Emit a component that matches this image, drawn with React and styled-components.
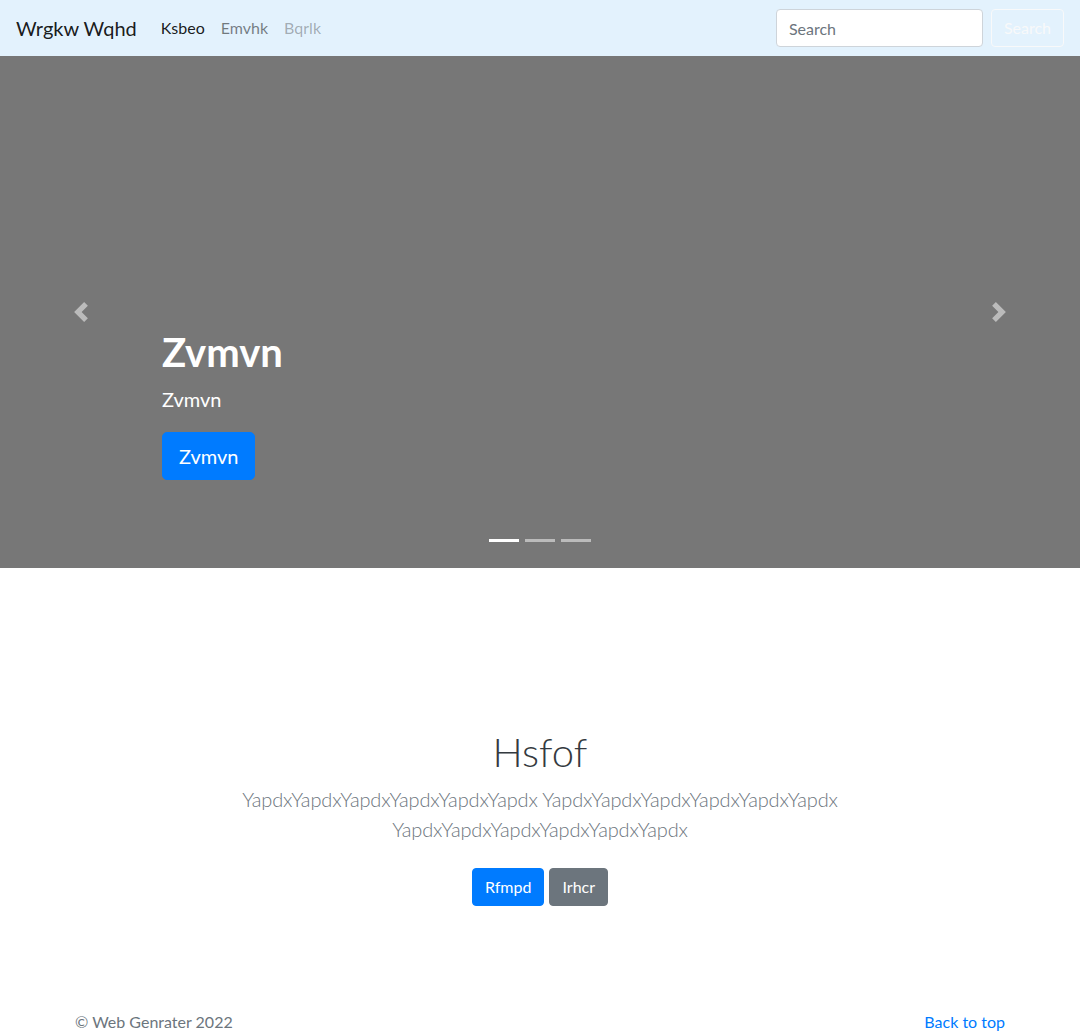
import React from 'react';
import styled, { createGlobalStyle } from 'styled-components';

const GlobalStyle = createGlobalStyle`
  * { box-sizing: border-box; }
  body {
    margin: 0;
    font-family: Lato, "Open Sans", sans-serif;
    font-size: 16px;
    line-height: 1.5;
    color: #212529;
    background: #fff;
  }
`;

const Navbar = styled.nav`
  height: 56px;
  padding: 8px 16px;
  background: #e3f2fd;
  display: flex;
  align-items: center;
`;

const Brand = styled.a`
  font-size: 20px;
  line-height: 30px;
  color: rgba(0, 0, 0, 0.9);
  margin-right: 16px;
  text-decoration: none;
`;

const NavList = styled.div`
  display: flex;
  flex: 1;
`;

const NavLink = styled.a`
  padding: 8px;
  text-decoration: none;
  color: ${p => (p.$active ? 'rgba(0,0,0,0.9)' : p.$disabled ? 'rgba(0,0,0,0.3)' : 'rgba(0,0,0,0.5)')};
`;

const SearchForm = styled.form`
  display: flex;
  align-items: center;
  gap: 8px;
  margin: 0;
`;

const SearchInput = styled.input`
  width: 207px;
  height: 38px;
  padding: 6px 12px;
  font: inherit;
  color: #495057;
  border: 1px solid #ced4da;
  border-radius: 4px;
  background: #fff;
  &::placeholder { color: #6c757d; }
`;

const OutlineButton = styled.button`
  height: 38px;
  padding: 6px 12px;
  font: inherit;
  color: #f8f9fa;
  background: transparent;
  border: 1px solid #f8f9fa;
  border-radius: 4px;
`;

const Carousel = styled.section`
  height: 512px;
  background: #777;
  display: grid;
  grid-template-columns: 15% 1fr 15%;
`;

const Control = styled.a`
  display: flex;
  align-items: center;
  justify-content: center;
  opacity: 0.5;
  svg { width: 20px; height: 20px; }
`;

const SlideBody = styled.div`
  display: flex;
  flex-direction: column;
  justify-content: flex-end;
  padding-bottom: 26px;
`;

const Caption = styled.div`
  color: #fff;
  text-align: left;
  margin-bottom: 59px;
`;

const CaptionTitle = styled.h1`
  margin: 0 0 8px;
  font-size: 40px;
  line-height: 48px;
  font-weight: 700;
`;

const CaptionText = styled.p`
  margin: 0 0 18px;
  font-size: 20px;
  line-height: 30px;
`;

const Button = styled.a`
  display: inline-block;
  padding: ${p => (p.$large ? '8px 16px' : '6px 12px')};
  font-size: ${p => (p.$large ? '20px' : '16px')};
  line-height: ${p => (p.$large ? '30px' : '24px')};
  border-radius: ${p => (p.$large ? '5px' : '4px')};
  border: 1px solid ${p => (p.$variant === 'secondary' ? '#6c757d' : '#007bff')};
  background: ${p => (p.$variant === 'secondary' ? '#6c757d' : '#007bff')};
  color: #fff;
  text-decoration: none;
`;

const Indicators = styled.ol`
  display: flex;
  justify-content: center;
  gap: 6px;
  list-style: none;
  margin: 0;
  padding: 0;
`;

const Indicator = styled.li`
  width: 30px;
  height: 3px;
  background: #fff;
  opacity: ${p => (p.$active ? 1 : 0.5)};
`;

const Intro = styled.section`
  padding: 160px 16px 48px;
  text-align: center;
`;

const IntroInner = styled.div`
  max-width: 640px;
  margin: 0 auto;
`;

const IntroTitle = styled.h1`
  margin: 0 0 8px;
  font-size: 40px;
  line-height: 48px;
  font-weight: 300;
  color: #343a40;
`;

const Lead = styled.p`
  margin: 0 0 16px;
  font-size: 20px;
  line-height: 30px;
  font-weight: 300;
  letter-spacing: -0.15px;
  color: #6c757d;
`;

const ButtonRow = styled.div`
  display: flex;
  justify-content: center;
  gap: 5px;
  padding: 8px 0;
`;

const Footer = styled.footer`
  width: 960px;
  margin: 0 auto;
  padding: 48px 15px;
  display: flex;
  justify-content: space-between;
  color: #6c757d;
`;

const FooterLink = styled.a`
  color: #007bff;
  text-decoration: none;
`;

const Chevron = ({ dir }) => (
  <svg viewBox="0 0 8 8" fill="#fff">
    {dir === 'prev' ? (
      <path d="M5.25 0l-4 4 4 4 1.5-1.5-2.5-2.5 2.5-2.5-1.5-1.5z" />
    ) : (
      <path d="M2.75 0l-1.5 1.5 2.5 2.5-2.5 2.5 1.5 1.5 4-4-4-4z" />
    )}
  </svg>
);

export default function App() {
  return (
    <>
      <GlobalStyle />
      <Navbar>
        <Brand href="#">Wrgkw Wqhd</Brand>
        <NavList>
          <NavLink href="#" $active>Ksbeo</NavLink>
          <NavLink href="#">Emvhk</NavLink>
          <NavLink href="#" $disabled>Bqrlk</NavLink>
        </NavList>
        <SearchForm onSubmit={e => e.preventDefault()}>
          <SearchInput type="search" placeholder="Search" />
          <OutlineButton type="submit">Search</OutlineButton>
        </SearchForm>
      </Navbar>

      <Carousel>
        <Control href="#"><Chevron dir="prev" /></Control>
        <SlideBody>
          <Caption>
            <CaptionTitle>Zvmvn</CaptionTitle>
            <CaptionText>Zvmvn</CaptionText>
            <Button href="#" $large>Zvmvn</Button>
          </Caption>
          <Indicators>
            <Indicator $active />
            <Indicator />
            <Indicator />
          </Indicators>
        </SlideBody>
        <Control href="#"><Chevron dir="next" /></Control>
      </Carousel>

      <Intro>
        <IntroInner>
          <IntroTitle>Hsfof</IntroTitle>
          <Lead>YapdxYapdxYapdxYapdxYapdxYapdx YapdxYapdxYapdxYapdxYapdxYapdx YapdxYapdxYapdxYapdxYapdxYapdx</Lead>
          <ButtonRow>
            <Button href="#">Rfmpd</Button>
            <Button href="#" $variant="secondary">Irhcr</Button>
          </ButtonRow>
        </IntroInner>
      </Intro>

      <Footer>
        <span>© Web Genrater 2022</span>
        <FooterLink href="#">Back to top</FooterLink>
      </Footer>
    </>
  );
}
